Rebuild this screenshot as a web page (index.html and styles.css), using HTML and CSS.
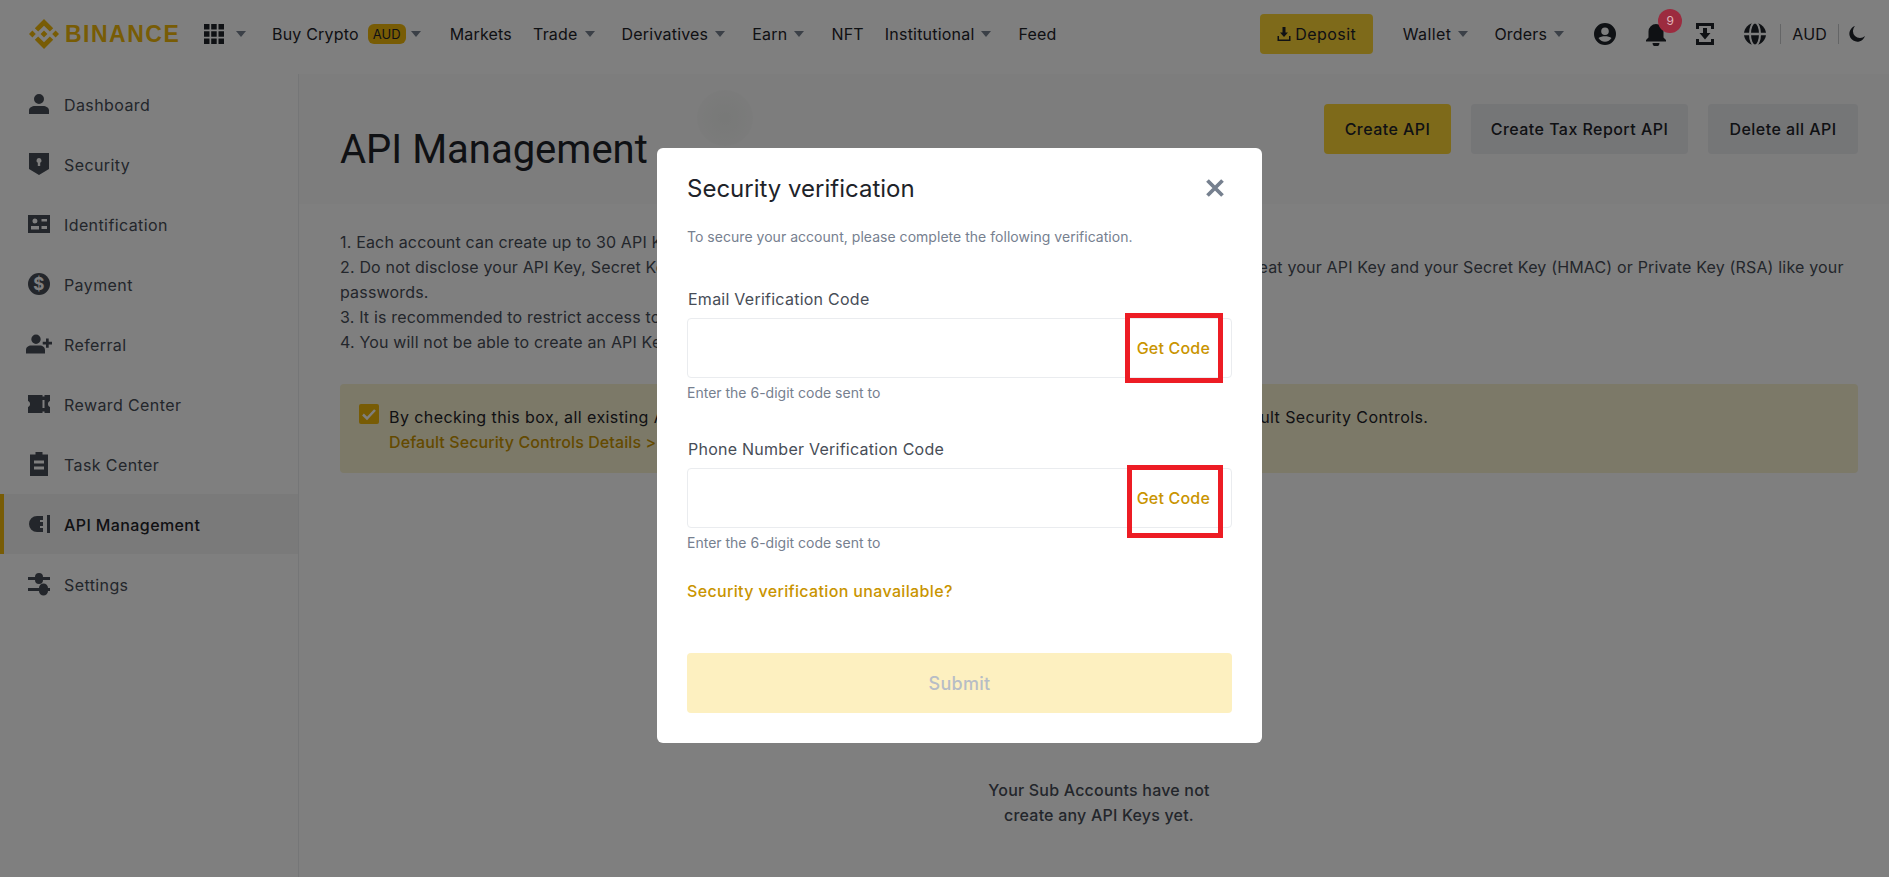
FILE: index.html
```html
<!DOCTYPE html>
<html lang="en">
<head>
  <meta charset="UTF-8">
  <title>API Management</title>
  <link rel="stylesheet" href="styles.css">
</head>
<body>

  <header class="topbar">
    <a class="logo">
      <svg width="30" height="30" viewBox="0 0 126.61 126.61"><path fill="#f0b90b" d="M38.73 53.2l24.59-24.58 24.6 24.6 14.3-14.31L63.32 0 24.42 38.9zM0 63.31l14.3-14.31 14.31 14.31-14.31 14.3zM38.73 73.41l24.59 24.59 24.6-24.6 14.31 14.29-38.9 38.91-38.91-38.88zM98 63.31l14.3-14.31 14.31 14.3-14.31 14.32zM77.83 63.3L63.32 48.78 48.81 63.28l14.51 14.5z"/></svg>
      <span class="logo-text">BINANCE</span>
    </a>
    <svg class="apps" width="20" height="20" viewBox="0 0 20 20"><path fill="#1e2329" d="M0 0h5.500v5.500H0zM7.200 0h5.500v5.500H7.200zM14.500 0H20v5.500h-5.500zM0 7.200h5.500v5.500H0zM7.200 7.200h5.500v5.500H7.200zM14.500 7.200H20v5.500h-5.500zM0 14.500h5.500V20H0zM7.200 14.500h5.500V20H7.200zM14.500 14.500H20V20h-5.500z"/></svg>
    <span class="caret caret-apps"></span>
    <nav class="nav">
      <a class="nav-link">Buy Crypto<span class="tag">AUD</span><span class="caret"></span></a>
      <a class="nav-link">Markets</a>
      <a class="nav-link">Trade<span class="caret"></span></a>
      <a class="nav-link">Derivatives<span class="caret"></span></a>
      <a class="nav-link">Earn<span class="caret"></span></a>
      <a class="nav-link">NFT</a>
      <a class="nav-link">Institutional<span class="caret"></span></a>
      <a class="nav-link">Feed</a>
    </nav>
    <div class="top-right">
      <button class="btn btn-yellow btn-deposit">
        <svg width="16" height="16" viewBox="0 0 16 16"><path fill="#1e2329" d="M6.500 1h3v5.500H12L8 11 4 6.500h2.500zM1.500 10H3v3.500h10V10h1.500v5h-13z"/></svg>
        Deposit
      </button>
      <a class="nav-link nav-wallet">Wallet<span class="caret"></span></a>
      <a class="nav-link nav-orders">Orders<span class="caret"></span></a>
      <svg class="ic-user" width="24" height="24" viewBox="0 0 24 24"><path fill="#1e2329" fill-rule="evenodd" d="M12 1a11 11 0 110 22 11 11 0 010-22zm0 4.500a3.800 3.800 0 100 7.600 3.800 3.800 0 000-7.600zM5.500 16c1.400 2.300 3.800 3.700 6.500 3.700s5.100-1.400 6.500-3.700c-1.500-1.100-4-1.700-6.500-1.700s-5 .6-6.500 1.700z"/></svg>
      <div class="bell">
        <svg width="24" height="24" viewBox="0 0 24 24"><path fill="#1e2329" d="M12 2a7.500 7.500 0 017.500 7.500v6l2.500 2.500v1.500H2V18l2.500-2.500v-6A7.500 7.500 0 0112 2zM8.500 21h7a3.500 3.500 0 01-7 0z"/></svg>
        <span class="badge">9</span>
      </div>
      <svg class="ic-dl" width="24" height="24" viewBox="0 0 24 24"><path fill="#1e2329" d="M3 1h18v6h-3V4H6v3H3zM3 17h3v3h12v-3h3v6H3zM10 6h4v5h3.500L12 17.500 6.500 11H10z"/></svg>
      <svg class="ic-globe" width="24" height="24" viewBox="0 0 24 24">
        <circle cx="12" cy="12" r="11" fill="#1e2329"/>
        <ellipse cx="12" cy="12" rx="5" ry="11.500" fill="none" stroke="#fff" stroke-width="2"/>
        <path stroke="#fff" stroke-width="2.500" d="M0 12h24"/>
      </svg>
      <span class="divider divider-1"></span>
      <span class="nav-link nav-cur">AUD</span>
      <span class="divider divider-2"></span>
      <svg class="ic-moon" width="18" height="18" viewBox="0 0 18 18"><path fill="#1e2329" d="M7 1a8 8 0 1010 10A7 7 0 017 1z"/></svg>
    </div>
  </header>

  <div class="layout">
    <aside class="sidebar">
      <a class="side-item">
        <svg width="24" height="24" viewBox="0 0 24 24"><path fill="#474d57" d="M12 2a5 5 0 110 10 5 5 0 010-10zM2 22v-3.500C2 15.500 5 14 8 14h8c3 0 6 1.500 6 4.500V22z"/></svg>
        Dashboard
      </a>
      <a class="side-item">
        <svg width="24" height="24" viewBox="0 0 24 24"><path fill="#474d57" fill-rule="evenodd" d="M2 1h20v16l-10 6-10-6zM12 6a2.500 2.500 0 00-1.200 4.700V14h2.400v-3.300A2.500 2.500 0 0012 6z"/></svg>
        Security
      </a>
      <a class="side-item">
        <svg width="24" height="24" viewBox="0 0 24 24"><path fill="#474d57" fill-rule="evenodd" d="M1 3h22v18H1zM8 6.500a2.500 2.500 0 100 5 2.500 2.500 0 000-5zM4 17.500h8V14H4zM14.500 7v2.500H20V7zM14.500 14v3h5.500v-3z"/></svg>
        Identification
      </a>
      <a class="side-item">
        <svg width="24" height="24" viewBox="0 0 24 24"><circle cx="12" cy="12" r="11" fill="#474d57"/><text class="dollar" x="12" y="18" text-anchor="middle">$</text></svg>
        Payment
      </a>
      <a class="side-item">
        <svg width="28" height="24" viewBox="0 0 28 24" class="ic-wide"><path fill="#474d57" d="M11 2.500a4.700 4.700 0 110 9.400 4.700 4.700 0 010-9.400zM1 21.500V18c0-3 2.500-4.500 5-4.500h9c2.500 0 5 1.500 5 4.500v3.500zM21 6.500h2.700v3.300H27v2.700h-3.300v3.300H21v-3.300h-3.300V9.800H21z"/></svg>
        Referral
      </a>
      <a class="side-item">
        <svg width="24" height="24" viewBox="0 0 24 24"><path fill="#474d57" d="M1 3h14.500v1.500h2V3H23v6c-1.500.5-2 1.700-2 3s.5 2.500 2 3v6h-5.500v-1.500h-2V21H1v-6c1.500-.5 2-1.700 2-3s-.5-2.500-2-3zM15.500 8v8h2V8z"/></svg>
        Reward Center
      </a>
      <a class="side-item">
        <svg width="24" height="24" viewBox="0 0 24 24"><path fill="#474d57" fill-rule="evenodd" d="M8.500 0h7v2.500H21V24H3V2.500h5.500zM7 8.500v3h10v-3zM7 14.500v3h10v-3z"/></svg>
        Task Center
      </a>
      <a class="side-item side-active">
        <svg width="24" height="24" viewBox="0 0 24 24"><path fill="#474d57" d="M10 4h6v4h-3v2h3v4h-3v2h3v4h-6a8 8 0 010-16zM20 3h3v18h-3z"/></svg>
        API Management
      </a>
      <a class="side-item">
        <svg width="24" height="24" viewBox="0 0 24 24"><path fill="#474d57" d="M1 5h7a4 4 0 018 0h7v3h-7a4 4 0 01-8 0H1zM1 16h11a4.500 4.500 0 019 0h2v3h-2a4.500 4.500 0 01-9 0H1z"/></svg>
        Settings
      </a>
    </aside>

    <main class="main">
      <section class="title-band">
        <h1 class="page-title">API Management</h1>
        <div class="title-actions">
          <button class="btn btn-yellow">Create API</button>
          <button class="btn btn-grey">Create Tax Report API</button>
          <button class="btn btn-grey">Delete all API</button>
        </div>
      </section>

      <ol class="rules">
        <li>1. Each account can create up to 30 API Keys.</li>
        <li>2. Do not disclose your API Key, Secret Key (HMAC) or Private Key (RSA) to anyone to avoid asset losses. You should treat your API Key and your Secret Key (HMAC) or Private Key (RSA) like your<br>passwords.</li>
        <li>3. It is recommended to restrict access to trusted IPs only.</li>
        <li>4. You will not be able to create an API Key if KYC is not completed.</li>
      </ol>

      <div class="notice">
        <span class="check">
          <svg width="20" height="20" viewBox="0 0 20 20"><path fill="none" stroke="#fff" stroke-width="2.500" d="M4 10.500l4 4 8-8.500"/></svg>
        </span>
        <div>
          <p class="notice-text">By checking this box, all existing API Key(s) on your master account and sub-accounts will be subject to Default Security Controls.</p>
          <a class="notice-link">Default Security Controls Details &gt;</a>
        </div>
      </div>

      <p class="empty">Your Sub Accounts have not<br>create any API Keys yet.</p>
    </main>
  </div>

  <div class="smudge"></div>
  <div class="overlay"></div>

  <div class="modal">
    <div class="modal-head">
      <h2 class="modal-title">Security verification</h2>
      <svg width="24" height="24" viewBox="0 0 24 24"><path fill="none" stroke="#76808f" stroke-width="3.800" d="M4.500 4.500l15 15M19.500 4.500l-15 15"/></svg>
    </div>
    <p class="modal-sub">To secure your account, please complete the following verification.</p>

    <label class="field-label">Email Verification Code</label>
    <div class="field">
      <span class="get-code">Get Code</span>
      <span class="marker"></span>
    </div>
    <p class="hint">Enter the 6-digit code sent to</p>

    <label class="field-label field-label-2">Phone Number Verification Code</label>
    <div class="field">
      <span class="get-code">Get Code</span>
      <span class="marker marker-2"></span>
    </div>
    <p class="hint">Enter the 6-digit code sent to</p>

    <a class="unavailable">Security verification unavailable?</a>
    <button class="submit">Submit</button>
  </div>

</body>
</html>
```

FILE: styles.css
```css
* {
  box-sizing: border-box;
}

body {
  margin: 0;
  height: 877px;
  overflow: hidden;
  background: #fff;
  color: #1e2329;
  font-family: Inter, Roboto, sans-serif;
  font-size: 16px;
  letter-spacing: 0.2px;
}

/* top bar */
.topbar {
  display: flex;
  align-items: center;
  height: 74px;
  padding: 0 23px 6px 29px;
}

.logo {
  display: flex;
  align-items: center;
  gap: 6px;
  width: 175px;
}

.logo-text {
  color: #f0b90b;
  font-family: "Liberation Sans", sans-serif;
  font-size: 23px;
  font-weight: 700;
  letter-spacing: 1.5px;
}

.caret {
  display: inline-block;
  width: 0;
  height: 0;
  margin-left: 7px;
  border-left: 5px solid transparent;
  border-right: 5px solid transparent;
  border-top: 6px solid #76808f;
}

.caret-apps {
  margin-left: 12px;
}

.nav {
  display: flex;
  align-items: center;
  gap: 21px;
  margin-left: 26px;
}

.nav .caret {
  margin-right: 6px;
}

.nav-link {
  display: inline-flex;
  align-items: center;
  color: #1e2329;
  white-space: nowrap;
}

.tag {
  margin-left: 9px;
  padding: 2px 5px;
  border-radius: 6px;
  background: #f0b90b;
  font-size: 13px;
  letter-spacing: 0;
  line-height: 16px;
}

.nav .tag + .caret {
  margin: 0 8px 0 5px;
}

.top-right {
  display: flex;
  align-items: center;
  margin-left: auto;
}

.btn {
  height: 50px;
  padding: 0;
  border: 0;
  border-radius: 4px;
  color: #1e2329;
  font-family: inherit;
  font-size: 16px;
  font-weight: 500;
  letter-spacing: 0.45px;
}

.btn-yellow {
  background: #fcd535;
}

.btn-grey {
  background: #eaecef;
}

.btn-deposit {
  display: flex;
  align-items: center;
  justify-content: center;
  gap: 3px;
  width: 113px;
  height: 40px;
  font-weight: 400;
}

.nav-wallet {
  margin-left: 30px;
  letter-spacing: 0.4px;
}

.nav-orders {
  margin-left: 26px;
}

.ic-user {
  margin-left: 29px;
}

.bell {
  position: relative;
  height: 24px;
  margin-left: 27px;
}

.badge {
  position: absolute;
  z-index: 2;
  top: -13px;
  left: 14px;
  width: 24px;
  height: 24px;
  border-radius: 50%;
  background: #9c2b3f;
  color: #e0b4bc;
  font-size: 12px;
  line-height: 24px;
  text-align: center;
}

.ic-dl {
  margin-left: 25px;
}

.ic-globe {
  margin-left: 26px;
}

.divider {
  width: 1px;
  height: 20px;
  background: #c8cacd;
}

.divider-1 {
  margin: 0 11px 0 13px;
}

.divider-2 {
  margin: 0 9px 0 11px;
}

/* page layout */
.layout {
  display: flex;
  height: 803px;
}

.sidebar {
  width: 299px;
  border-right: 1px solid #eaecef;
}

.side-item {
  display: flex;
  align-items: center;
  gap: 13px;
  height: 60px;
  padding: 2px 0 0 27px;
  color: #474d57;
  letter-spacing: 0.4px;
}

.side-item svg {
  flex: none;
  margin-top: -2px;
}

.side-item .ic-wide {
  margin: -2px -2px 0;
}

.dollar {
  fill: #fff;
  font-size: 17px;
  font-weight: 700;
}

.side-active {
  border-left: 4px solid #f0b90b;
  padding-left: 23px;
  background: #f5f5f5;
  color: #1e2329;
  font-weight: 500;
}

.main {
  flex: 1;
  min-width: 0;
}

.title-band {
  display: flex;
  justify-content: space-between;
  height: 130px;
  padding: 30px 31px 0 41px;
  background: #fafafa;
}

.page-title {
  margin: 16px 0 0;
  font-family: Roboto, sans-serif;
  font-size: 40px;
  font-weight: 400;
  letter-spacing: 0;
  line-height: 60px;
}

.title-actions {
  display: flex;
  gap: 20px;
}

.title-actions .btn-yellow {
  width: 127px;
}

.title-actions .btn-grey:nth-child(2) {
  width: 217px;
}

.title-actions .btn-grey:nth-child(3) {
  width: 150px;
}

.rules {
  margin: 26px 31px 0 41px;
  padding: 0;
  list-style: none;
  color: #474d57;
  letter-spacing: 0.17px;
  line-height: 25px;
}

.notice {
  display: flex;
  gap: 10px;
  height: 89px;
  margin: 29px 31px 0 41px;
  padding: 21px 19px;
  border-radius: 4px;
  background: #f8f2d0;
  line-height: 25px;
}

.check {
  flex: none;
  width: 20px;
  height: 20px;
  margin-top: -1px;
  border-radius: 2px;
  background: #f0b90b;
}

.check svg {
  display: block;
}

.notice-text {
  margin: 0;
  letter-spacing: 0.42px;
}

.notice-link {
  color: #c99400;
  font-weight: 500;
  letter-spacing: 0.1px;
}

.empty {
  margin: 305px 0 0;
  padding-left: 10px;
  color: #474d57;
  font-weight: 500;
  line-height: 25px;
  text-align: center;
}

.smudge {
  position: absolute;
  left: 697px;
  top: 90px;
  width: 56px;
  height: 56px;
  border-radius: 50%;
  background: radial-gradient(circle, #f0f2f0 0, #fafafa 100%);
}

/* dialog over the page */
.overlay {
  position: fixed;
  z-index: 1;
  inset: 0;
  background: rgba(0, 0, 0, 0.5);
}

.modal {
  position: fixed;
  z-index: 3;
  left: 657px;
  top: 148px;
  width: 605px;
  height: 595px;
  padding: 22px 30px;
  border-radius: 6px;
  background: #fff;
  letter-spacing: 0;
}

.modal-head {
  display: flex;
  align-items: center;
  justify-content: space-between;
  height: 36px;
  padding-right: 5px;
}

.modal-title {
  margin: 0;
  font-size: 24px;
  font-weight: 400;
}

.modal-sub {
  margin: 21px 0 0;
  color: #76808f;
  font-size: 14px;
  letter-spacing: 0.03px;
  line-height: 20px;
}

.field-label {
  display: block;
  margin-top: 40px;
  padding-left: 1px;
  color: #474d57;
  letter-spacing: 0.25px;
  line-height: 24px;
}

.field-label-2 {
  margin-top: 34px;
}

.field {
  position: relative;
  display: flex;
  align-items: center;
  justify-content: flex-end;
  height: 60px;
  margin-top: 7px;
  padding-right: 21px;
  border: 1px solid #eaecef;
  border-radius: 4px;
}

.get-code {
  color: #c99400;
  font-weight: 500;
  letter-spacing: 0.2px;
}

.marker {
  position: absolute;
  top: -6px;
  right: 8px;
  width: 98px;
  height: 70px;
  border: 5px solid #ed1c24;
}

.marker-2 {
  top: -4px;
  width: 96px;
  height: 73px;
}

.hint {
  margin: 5px 0 0;
  color: #76808f;
  font-size: 14px;
  line-height: 20px;
}

.unavailable {
  display: block;
  margin-top: 26px;
  color: #c99400;
  font-weight: 500;
  letter-spacing: 0.35px;
  line-height: 24px;
}

.submit {
  display: block;
  width: 100%;
  height: 60px;
  margin-top: 50px;
  border: 0;
  border-radius: 4px;
  background: #fdf0c0;
  color: #b7bdc6;
  font-family: inherit;
  font-size: 18px;
  font-weight: 500;
  letter-spacing: 0.3px;
}
```
